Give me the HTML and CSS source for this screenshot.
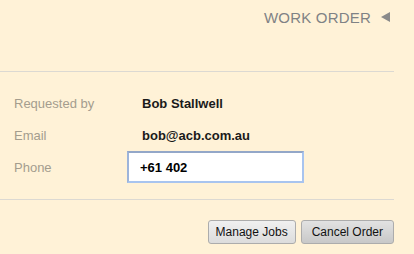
FILE: index.html
```html
<!DOCTYPE html>
<html lang="en">
<head>
    <meta charset="UTF-8">
    <title>Work Order</title>
    <link rel="stylesheet" href="styles.css">
</head>
<body>
    <div class="header">
        <span class="title">WORK ORDER</span>
        <svg class="arrow" width="9" height="10" viewBox="0 0 9 10"><polygon points="0,5 9,0 9,10" fill="#8a8a8a"/></svg>
    </div>
    <div class="details">
        <div class="row">
            <div class="label">Requested by</div>
            <div class="value">Bob Stallwell</div>
        </div>
        <div class="row">
            <div class="label">Email</div>
            <div class="value">bob@acb.com.au</div>
        </div>
        <div class="row">
            <div class="label">Phone</div>
            <input type="text" class="phone" value="+61 402">
        </div>
    </div>
    <div class="actions">
        <button class="manage">Manage Jobs</button>
        <button class="pressed">Cancel Order</button>
    </div>
</body>
</html>
```
FILE: styles.css
```css
body {
    margin: 0;
    background: #fff2d7;
    font-family: "Liberation Sans", Arial, sans-serif;
    font-size: 13px;
    width: 394px;
}
.header {
    height: 72px;
    display: flex;
    justify-content: flex-end;
    align-items: flex-start;
    padding-top: 9px;
    box-sizing: border-box;
    border-bottom: 1px solid #dcd9d2;
    color: #7f8285;
}
.title {
    font-size: 15px;
    letter-spacing: 0.2px;
    margin-right: 10px;
}
.arrow {
    margin-right: 4px;
    margin-top: 3px;
}
.details {
    padding: 15px 0 16px 14px;
    border-bottom: 1px solid #dcd9d2;
}
.row {
    display: flex;
    align-items: center;
    height: 32px;
}
.label {
    width: 113px;
    color: #a49d8e;
}
.value {
    margin-left: 15px;
    font-weight: bold;
    color: #1a1a1a;
}
.phone {
    width: 177px;
    height: 32px;
    box-sizing: border-box;
    border: 2px solid #a8c4ef;
    border-top-color: #93a7c8;
    border-left-color: #9db4da;
    background: #fff;
    padding: 0 11px;
    font-family: "Liberation Sans", Arial, sans-serif;
    font-size: 13px;
    font-weight: bold;
    color: #000;
    outline: none;
}
.actions {
    display: flex;
    justify-content: flex-end;
    gap: 5px;
    padding-top: 20px;
}
button {
    height: 24px;
    padding: 0 10px;
    border: 1px solid #acacac;
    border-radius: 3px;
    background: linear-gradient(#f0f0f0, #dcdcdc);
    font-family: "Liberation Sans", Arial, sans-serif;
    font-size: 12px;
    color: #111;
}
button.manage {
    padding: 0 7px;
}
button.pressed {
    background: linear-gradient(#e2e2e2, #c8c8c8);
}
```
